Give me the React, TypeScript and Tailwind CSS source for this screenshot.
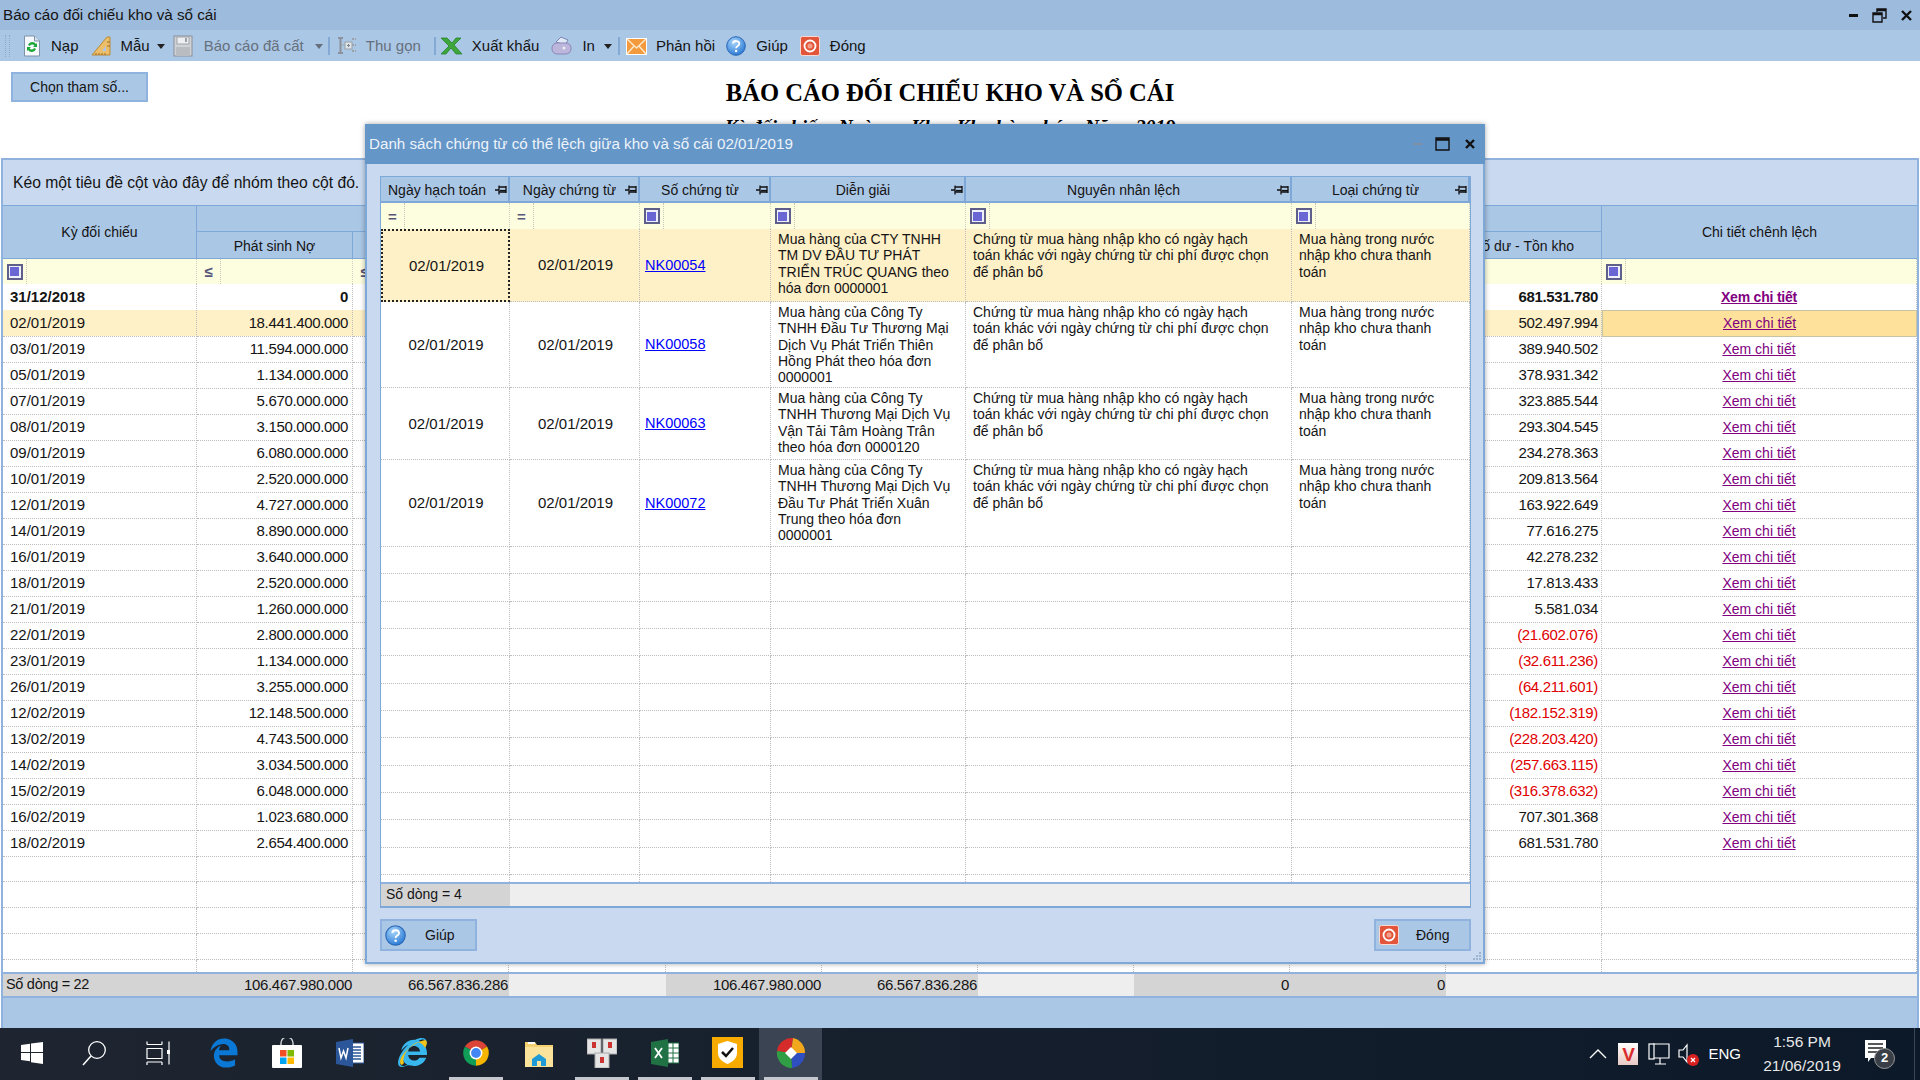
import React from "react";
import { FaEdgeLegacy, FaInternetExplorer } from "react-icons/fa6";

const GRID = "grid grid-cols-[194px_156px_156px_157px_156px_156px_156px_156px_156px_156px_315px]";
const MGRID = "grid grid-cols-[129px_130px_131px_195px_326px_178px]";
const DOT = "border-r border-b border-dotted border-[#bdbdbd]";

const rows: [string, string, string][] = [
  ["02/01/2019", "18.441.400.000", "502.497.994"],
  ["03/01/2019", "11.594.000.000", "389.940.502"],
  ["05/01/2019", "1.134.000.000", "378.931.342"],
  ["07/01/2019", "5.670.000.000", "323.885.544"],
  ["08/01/2019", "3.150.000.000", "293.304.545"],
  ["09/01/2019", "6.080.000.000", "234.278.363"],
  ["10/01/2019", "2.520.000.000", "209.813.564"],
  ["12/01/2019", "4.727.000.000", "163.922.649"],
  ["14/01/2019", "8.890.000.000", "77.616.275"],
  ["16/01/2019", "3.640.000.000", "42.278.232"],
  ["18/01/2019", "2.520.000.000", "17.813.433"],
  ["21/01/2019", "1.260.000.000", "5.581.034"],
  ["22/01/2019", "2.800.000.000", "(21.602.076)"],
  ["23/01/2019", "1.134.000.000", "(32.611.236)"],
  ["26/01/2019", "3.255.000.000", "(64.211.601)"],
  ["12/02/2019", "12.148.500.000", "(182.152.319)"],
  ["13/02/2019", "4.743.500.000", "(228.203.420)"],
  ["14/02/2019", "3.034.500.000", "(257.663.115)"],
  ["15/02/2019", "6.048.000.000", "(316.378.632)"],
  ["16/02/2019", "1.023.680.000", "707.301.368"],
  ["18/02/2019", "2.654.400.000", "681.531.780"],
];

const reason = "Chứng từ mua hàng nhập kho có ngày hạch\ntoán khác với ngày chứng từ chi phí được chọn\nđể phân bổ";
const kind = "Mua hàng trong nước\nnhập kho chưa thanh\ntoán";
const docs = [
  { no: "NK00054", h: "h-[73px]", desc: "Mua hàng của CTY TNHH\nTM DV ĐẦU TƯ PHÁT\nTRIỂN TRÚC QUANG theo\nhóa đơn 0000001" },
  { no: "NK00058", h: "h-[86px]", desc: "Mua hàng của Công Ty\nTNHH Đầu Tư Thương Mại\nDịch Vụ Phát Triển Thiên\nHồng Phát theo hóa đơn\n0000001" },
  { no: "NK00063", h: "h-[72px]", desc: "Mua hàng của Công Ty\nTNHH Thương Mại Dịch Vụ\nVận Tải Tâm Hoàng Trân\ntheo hóa đơn 0000120" },
  { no: "NK00072", h: "h-[87px]", desc: "Mua hàng của Công Ty\nTNHH Thương Mại Dịch Vụ\nĐầu Tư Phát Triển Xuân\nTrung theo hóa đơn\n0000001" },
];

function FilterBox() {
  return (
    <span className="flex h-[16px] w-[16px] items-center justify-center border-2 border-[#5f5f8c] bg-[#eef0fa]">
      <span className="h-[9px] w-[9px] bg-[#6a66d4]" />
    </span>
  );
}

function FilterCell({ op, cls = "" }: { op?: string; cls?: string }) {
  return (
    <div className={`flex items-center border-r border-dotted border-[#d0d0c0] ${cls}`}>
      <div className="flex h-full w-[24px] items-center justify-center border-r border-dotted border-[#c8c8b8]">
        {op === undefined ? <FilterBox /> : op === "" ? null : <span className="text-[15px] font-bold leading-none text-[#56567a]">{op}</span>}
      </div>
    </div>
  );
}

function Pin() {
  return (
    <svg width="13" height="12" viewBox="0 0 13 12" className="shrink-0">
      <path d="M0 6h4M4 1.5v9M4 3h7v5H4M11 2v7" fill="none" stroke="#111" strokeWidth="1.3" />
      <path d="M5 6.6h6" stroke="#111" strokeWidth="1.4" />
    </svg>
  );
}

const Arrow = () => (
  <svg width="8" height="5" viewBox="0 0 8 5" className="shrink-0"><path d="M0 0h8L4 5z" fill="#222" /></svg>
);
const GrayArrow = () => (
  <svg width="8" height="5" viewBox="0 0 8 5" className="shrink-0"><path d="M0 0h8L4 5z" fill="#66707c" /></svg>
);
const Sep = ({ cls }: { cls: string }) => <span className={`h-[18px] w-[2px] bg-[#84a9d4] ${cls}`} />;

const IconNap = () => (
  <svg width="18" height="22" viewBox="0 0 18 22" className="shrink-0">
    <path d="M1.5 1h10l5 5v15h-15z" fill="#f5f8fc" stroke="#7f93a8" />
    <path d="M11.5 1v5h5" fill="#d7e2ee" stroke="#7f93a8" />
    <path d="M5 10a4.5 4.5 0 0 1 8-1l1-1v4h-4l1.4-1.3A2.6 2.6 0 0 0 6.800 11z" fill="#1fa83a" />
    <path d="M13 14a4.500 4.500 0 0 1-8 1l-1 1v-4h4l-1.400 1.300A2.600 2.600 0 0 0 11.200 13z" fill="#1fa83a" />
  </svg>
);
const IconRuler = () => (
  <svg width="20" height="20" viewBox="0 0 20 20" className="shrink-0">
    <path d="M1 19 16 1h3v18z" fill="#edbe6a" stroke="#b98a34" />
    <path d="M11 15l4-5v5z" fill="#abc7e6" />
    <path d="M5 17v2M8 17v2M11 17v2M14 17v2M16 6h3M16 10h3" stroke="#9b6f22" />
  </svg>
);
const IconSave = () => (
  <svg width="20" height="22" viewBox="0 0 20 22" className="shrink-0">
    <rect x="1" y="1" width="18" height="20" fill="#cfd2d6" stroke="#8d9299" />
    <rect x="4" y="2" width="12" height="7" fill="#eceef0" stroke="#a0a4aa" />
    <rect x="12" y="3" width="2" height="4" fill="#9ba0a6" />
    <rect x="3" y="12" width="14" height="9" fill="#b9bcc1" />
  </svg>
);
const IconTree = () => (
  <svg width="20" height="22" viewBox="0 0 20 22" className="shrink-0">
    <path d="M1 3h5M3.500 3v15M1 18h5" fill="none" stroke="#8b929b" strokeWidth="2" />
    <path d="M4 10h4" stroke="#a3a9b0" />
    <rect x="8" y="7" width="7" height="7" fill="#dfe4e9" stroke="#9aa1a9" />
    <path d="M10 10.500h3M11.500 9v3" stroke="#7d858e" />
    <path d="M15 4h4M15 10h4M15 16h4" stroke="#9aa1a9" strokeWidth="2" strokeDasharray="2 1" />
  </svg>
);
const IconX = () => (
  <svg width="22" height="18" viewBox="0 0 22 18" className="shrink-0">
    <path d="M0 1h6l5 5 4-5h5l-7 7 8 9h-6l-5-6-5 6H0l8-8z" fill="#3ea63a" stroke="#1d7d23" strokeWidth=".7" />
  </svg>
);
const IconPrinter = () => (
  <svg width="21" height="20" viewBox="0 0 21 20" className="shrink-0">
    <path d="M5 6 10 1l7 3-3 5z" fill="#dfe8f6" stroke="#7d86b4" />
    <rect x="1" y="7" width="19" height="11" rx="5" fill="#bcb5dc" stroke="#8c86b8" />
    <circle cx="13" cy="12" r="1.500" fill="#eee" />
  </svg>
);
const IconMail = () => (
  <svg width="21" height="17" viewBox="0 0 21 17" className="shrink-0">
    <rect x=".5" y=".5" width="20" height="16" fill="#f39a3c" stroke="#fff" />
    <path d="M1 1l9.500 9L20 1M1 16l7-8M20 16l-7-8" fill="none" stroke="#fde7c8" strokeWidth="1.500" />
  </svg>
);
const IconHelp = ({ s = 20 }: { s?: number }) => (
  <svg width={s} height={s} viewBox="0 0 20 20" className="shrink-0">
    <defs>
      <radialGradient id="hg" cx=".4" cy=".3" r=".8"><stop offset="0" stopColor="#a9d6fb" /><stop offset="1" stopColor="#1c6fd0" /></radialGradient>
    </defs>
    <circle cx="10" cy="10" r="9.300" fill="url(#hg)" stroke="#2a67b4" />
    <path d="M7 7.500c.3-3.500 6.300-3.200 6.300.3 0 2.300-3.200 2.200-3.200 4.500" fill="none" stroke="#fff" strokeWidth="1.800" />
    <circle cx="10.100" cy="15" r="1.200" fill="#fff" />
  </svg>
);
const IconClose = ({ s = 20 }: { s?: number }) => (
  <svg width={s} height={s} viewBox="0 0 20 20" className="shrink-0">
    <rect x=".5" y=".5" width="19" height="19" rx="2" fill="#e2553a" stroke="#f8d8d0" />
    <circle cx="10" cy="10" r="5.500" fill="none" stroke="#fff" strokeWidth="1.800" />
    <circle cx="10" cy="10" r="2.500" fill="#f2a08c" />
  </svg>
);

const Win = () => (
  <svg width="22" height="22" viewBox="0 0 22 22"><path d="M0 3l9-1.300V10H0zM10 1.500 22 0v10H10zM0 11h9v8.300L0 18zM10 11h12v11l-12-1.700z" fill="#fff" /></svg>
);
const Search = () => (
  <svg width="26" height="28" viewBox="0 0 26 28"><circle cx="15" cy="11" r="8.300" fill="none" stroke="#fff" strokeWidth="1.300" /><path d="M9 17 1 26" stroke="#fff" strokeWidth="1.500" /></svg>
);
const TaskView = () => (
  <svg width="24" height="24" viewBox="0 0 24 24" fill="none" stroke="#fff" strokeWidth="1.200">
    <path d="M1 3.500h15M1 .5v3M16 .5v3M1 7.500h15v10H1zM1 21h15M1 21v3M16 21v3M23 .5v23" />
    <rect x="21" y="9" width="4" height="4" fill="#fff" stroke="none" />
  </svg>
);
const Store = () => (
  <svg width="30" height="30" viewBox="0 0 30 30">
    <path d="M9 8V5a6 6 0 0 1 12 0v3" fill="none" stroke="#c9ccd0" strokeWidth="1.500" />
    <rect y="7" width="30" height="23" rx="1" fill="#fff" />
    <rect x="8" y="12" width="6.500" height="6.500" fill="#f25022" />
    <rect x="15.500" y="12" width="6.500" height="6.500" fill="#7fba00" />
    <rect x="8" y="19.500" width="6.500" height="6.500" fill="#00a4ef" />
    <rect x="15.500" y="19.500" width="6.500" height="6.500" fill="#ffb900" />
  </svg>
);
const Word = () => (
  <svg width="28" height="28" viewBox="0 0 28 28">
    <rect x="13" y="4" width="15" height="20" fill="#fff" stroke="#2b579a" />
    <path d="M16 8h9M16 11h9M16 14h9M16 17h9M16 20h9" stroke="#2b579a" strokeWidth="1.300" />
    <path d="M0 3 17 0v28L0 25z" fill="#2b579a" />
    <path d="M3 9l2 10 2.500-7 2.500 7 2-10" fill="none" stroke="#fff" strokeWidth="1.500" />
  </svg>
);
const IE = () => (
  <span className="relative flex h-[30px] w-[30px] items-center justify-center">
    <FaInternetExplorer className="text-[29px] text-[#38b6ee]" />
    <svg width="30" height="30" viewBox="0 0 30 30" className="absolute left-0 top-0">
      <path d="M4 27C-3 24 10 6 27 2c3 1 2 5 0 8-1-3-4-5-7-6C11 7 3 20 6 25z" fill="#f2c318" />
    </svg>
  </span>
);
const Chrome = () => (
  <svg width="28" height="28" viewBox="0 0 24 24">
    <path d="M12 12 2.500 6.500A11 11 0 0 1 21.500 6.500Z" fill="#db4437" />
    <path d="M12 12 2.500 6.500A11 11 0 0 0 12 23Z" fill="#0f9d58" />
    <path d="M12 12 21.500 6.500A11 11 0 0 1 12 23Z" fill="#f4b400" />
    <circle cx="12" cy="12" r="5.500" fill="#fff" />
    <circle cx="12" cy="12" r="4.200" fill="#4285f4" />
  </svg>
);
const Folder = () => (
  <svg width="28" height="28" viewBox="0 0 28 28">
    <path d="M0 3h10l2 3h16v22H0z" fill="#f6d16f" />
    <path d="M0 8h28v20H0z" fill="#fbe39c" />
    <path d="M3 3h7v2H3z" fill="#fff" />
    <path d="M7 27v-7l7-5 7 5v7h-5v-5h-4v5z" fill="#1e9bd7" />
  </svg>
);
const Tiles = () => (
  <svg width="30" height="30" viewBox="0 0 30 30">
    <rect x="0" y="1" width="14" height="15" fill="#e5e5e5" stroke="#aaa" />
    <rect x="16" y="1" width="14" height="15" fill="#e5e5e5" stroke="#aaa" />
    <rect x="8" y="15" width="14" height="15" fill="#e5e5e5" stroke="#aaa" />
    <rect x="5" y="4" width="4" height="6" fill="#c33" />
    <rect x="21" y="4" width="4" height="6" fill="#c33" />
    <rect x="13" y="19" width="4" height="6" fill="#c33" />
  </svg>
);
const Excel = () => (
  <svg width="28" height="28" viewBox="0 0 28 28">
    <rect x="13" y="4" width="15" height="20" fill="#fff" stroke="#207245" />
    <path d="M17 4v20M22 4v20M13 9h15M13 14h15M13 19h15" stroke="#207245" />
    <path d="M0 3 17 0v28L0 25z" fill="#207245" />
    <path d="M4 9l7 10M11 9l-7 10" stroke="#fff" strokeWidth="1.800" />
  </svg>
);
const Shield = () => (
  <svg width="31" height="31" viewBox="0 0 31 31">
    <rect width="31" height="31" fill="#f7ab00" />
    <path d="M15.500 4 25 7v9c0 6-5 9-9.500 11C11 25 6 22 6 16V7z" fill="#fff" />
    <path d="M10 15l4 4 7-8" fill="none" stroke="#111" strokeWidth="2.500" />
  </svg>
);
const AppIcon = () => (
  <svg width="30" height="32" viewBox="0 0 30 32">
    <path d="M15 16 1 14A15 15 0 0 1 17 1z" fill="#d52b2b" />
    <path d="M15 16 17 1a15 15 0 0 1 12 15z" fill="#f2a81d" />
    <path d="M15 16h14a15 15 0 0 1-13 15z" fill="#2f4fc0" />
    <path d="M15 16 16 31A15 15 0 0 1 1 14z" fill="#2f9e44" />
    <path d="M15 10l6 6-6 6-6-6z" fill="#fff" />
  </svg>
);

const Tb = ({ children, active, on }: { children: React.ReactNode; active?: boolean; on?: boolean }) => (
  <div className={`flex h-full w-[63px] shrink-0 flex-col items-center ${on ? "bg-[#3a4452]" : ""}`}>
    <div className="flex flex-1 items-center justify-center">{children}</div>
    <div className={`h-[3px] w-[54px] ${active ? "bg-[#c4c8ce]" : ""}`} />
  </div>
);

function MainRow({ d, a, b, sel, bold, red }: { d?: string; a?: string; b?: string; sel?: boolean; bold?: boolean; red?: boolean }) {
  const bg = sel ? "bg-[#fef0c7]" : "";
  return (
    <div className={`${GRID} h-[26px] shrink-0 items-stretch leading-[25px] ${bold ? "font-bold" : ""} ${bg}`}>
      <div className={`${DOT} pl-[7px]`}>{d}</div>
      <div className={`${DOT} pr-[4px] text-right tracking-[-0.35px]`}>{a}</div>
      {[0, 1, 2, 3, 4, 5, 6].map((i) => <div key={i} className={DOT} />)}
      <div className={`${DOT} pr-[3px] text-right tracking-[-0.35px] ${red ? "text-[#e00000]" : ""}`}>{b}</div>
      <div className={sel ? "border border-[#c9c3a6] bg-[#fee19a] text-center text-[14px]" : `${DOT} pt-[1px] text-center text-[14px] ${bold ? "tracking-[-0.2px]" : ""}`}>
        {d ? <span className="text-[#800080] underline">Xem chi tiết</span> : null}
      </div>
    </div>
  );
}

function ModalRow({ doc, first }: { doc: typeof docs[number]; first: boolean }) {
  const bg = first ? "bg-[#fef0c7]" : "";
  const txt = `${DOT} whitespace-pre-line pl-[7px] pt-[2px] text-[14px] leading-[16.3px]`;
  return (
    <div className={`${MGRID} ${doc.h} shrink-0 ${bg}`}>
      <div className={first ? "flex items-center justify-center border-2 border-dotted border-[#222] pl-[2px] pt-[1px]" : `${DOT} flex items-center justify-center pl-[2px] pt-[1px]`}>02/01/2019</div>
      <div className={`${DOT} flex items-center justify-center pl-[2px] pt-[1px]`}>02/01/2019</div>
      <div className={`${DOT} flex items-center pl-[5px] pt-[1px] text-[14.500px]`}><span className="text-[#0000ff] underline">{doc.no}</span></div>
      <div className={txt}>{doc.desc}</div>
      <div className={txt}>{reason}</div>
      <div className={txt}>{kind}</div>
    </div>
  );
}

function ModalHead({ label, center }: { label: string; center?: boolean }) {
  return (
    <div className="flex items-center border-r-2 border-[#7ea8d8] pl-[7px] pt-[2px] text-[14px]">
      <span className={`flex-1 whitespace-nowrap ${center ? "pr-[3px] text-center" : ""}`}>{label}</span>
      <Pin />
    </div>
  );
}

export default function App() {
  return (
    <div className="relative flex h-[1080px] w-[1920px] flex-col overflow-hidden bg-white text-[15px] text-[#141414] [font-family:'Liberation_Sans',Arial,sans-serif]">
      {/* window title */}
      <div className="flex h-[30px] shrink-0 items-center bg-[#9dbbdc] pl-[3px]">
        <span className="flex-1 text-[15.200px]">Báo cáo đối chiếu kho và sổ cái</span>
        <span className="h-[3px] w-[9px] bg-[#111]" />
        <svg width="15" height="15" viewBox="0 0 15 15" className="ml-[14px]"><path d="M5 4V1h9v9h-3M1 5h9v9H1zM1 6.500h9M5 2.500h9" fill="none" stroke="#111" strokeWidth="1.400" /></svg>
        <svg width="11" height="11" viewBox="0 0 11 11" className="ml-[14px] mr-[8px]"><path d="M1 1l9 9M10 1l-9 9" stroke="#111" strokeWidth="2.400" /></svg>
      </div>

      {/* toolbar */}
      <div className="flex h-[31px] shrink-0 items-center bg-[#abc7e6] pl-[5px] pt-[1px]">
        <span className="h-[22px] w-[5px] border-x border-dotted border-[#8fa9c6]" />
        <span className="ml-[13px] flex items-center"><IconNap /></span>
        <span className="ml-[10px]">Nạp</span>
        <span className="ml-[12px]"><IconRuler /></span>
        <span className="ml-[10px]">Mẫu</span>
        <span className="ml-[7px]"><Arrow /></span>
        <span className="ml-[8px]"><IconSave /></span>
        <span className="ml-[11px] text-[#66707c]">Báo cáo đã cất</span>
        <span className="ml-[11px]"><GrayArrow /></span>
        <Sep cls="ml-[5px]" />
        <span className="ml-[7px]"><IconTree /></span>
        <span className="ml-[9px] text-[#66707c]">Thu gọn</span>
        <Sep cls="ml-[13px]" />
        <span className="ml-[5px]"><IconX /></span>
        <span className="ml-[9px]">Xuất khẩu</span>
        <span className="ml-[12px]"><IconPrinter /></span>
        <span className="ml-[10px]">In</span>
        <span className="ml-[9px]"><Arrow /></span>
        <Sep cls="ml-[6px]" />
        <span className="ml-[6px]"><IconMail /></span>
        <span className="ml-[9px]">Phản hồi</span>
        <span className="ml-[11px]"><IconHelp /></span>
        <span className="ml-[10px]">Giúp</span>
        <span className="ml-[12px]"><IconClose /></span>
        <span className="ml-[10px]">Đóng</span>
      </div>

      {/* report heading */}
      <div className="flex h-[97px] shrink-0 overflow-hidden pl-[11px] pt-[11px]">
        <button className="h-[30px] w-[137px] shrink-0 border-2 border-[#8fb3de] bg-[#abc7e6] text-[14px] leading-[24px] text-[#141414]">Chọn tham số...</button>
        <div className="ml-[-148px] flex w-[1900px] shrink-0 flex-col items-center text-center [font-family:'Liberation_Serif','Times_New_Roman',serif]">
          <div className="mt-[7px] text-[24.600px] font-bold leading-[28px] text-black">BÁO CÁO ĐỐI CHIẾU KHO VÀ SỔ CÁI</div>
          <div className="mt-[7px] whitespace-pre text-[19.800px] font-bold italic leading-[24px] text-black">Kỳ đối chiếu: Ngày      Kho: Kho hàng hóa; Năm: 2019</div>
        </div>
      </div>

      {/* main grid */}
      <div className="mx-[1px] flex min-h-0 flex-1 flex-col border-x-2 border-[#8fb3de]">
        <div className="h-[47px] shrink-0 border-t-2 border-[#8fb3de] bg-[#c9daf0] pl-[10px] text-[15.700px] leading-[45px]">Kéo một tiêu đề cột vào đây để nhóm theo cột đó.</div>
        <div className={`${GRID} h-[54px] shrink-0 grid-rows-[27px_27px] bg-[#abc7e6]`}>
          <div className="row-span-2 flex items-center justify-center border-y border-r border-[#7ea8d8] text-[14px]">Kỳ đối chiếu</div>
          <div className="col-span-9 border-y border-r border-[#7ea8d8]" />
          <div className="row-span-2 flex items-center justify-center border-y border-[#7ea8d8] text-[14px]">Chi tiết chênh lệch</div>
          <div className="flex items-center justify-center border-b border-r border-[#7ea8d8] pt-[2px] text-[14px]">Phát sinh Nợ</div>
          {[0, 1, 2, 3, 4, 5, 6].map((i) => <div key={i} className="border-b border-r border-[#7ea8d8]" />)}
          <div className="flex items-center justify-center border-b border-r border-[#7ea8d8] pt-[2px] text-[14px]">Số dư - Tồn kho</div>
        </div>
        <div className={`${GRID} h-[25px] shrink-0 bg-[#fdfde0]`}>
          <FilterCell />
          <FilterCell op="≤" />
          <FilterCell op="≤" />
          {[0, 1, 2, 3, 4, 5, 6].map((i) => <FilterCell key={i} op="" />)}
          <FilterCell />
        </div>
        <div className="flex min-h-0 flex-1 flex-col overflow-hidden">
          <MainRow d="31/12/2018" a="0" b="681.531.780" bold />
          {rows.map((r, i) => <MainRow key={r[0]} d={r[0]} a={r[1]} b={r[2]} sel={i === 0} red={r[2].startsWith("(")} />)}
          {[0, 1, 2, 3, 4].map((i) => <MainRow key={i} />)}
        </div>
        <div className={`${GRID} h-[26px] shrink-0 border-y-2 border-[#8fb3de] bg-[#eeeeee] leading-[21px] tracking-[-0.3px]`}>
          <div className="bg-[#d4d4d4] pl-[3px] text-[14.500px]">Số dòng = 22</div>
          <div className="bg-[#d4d4d4] pr-[1px] text-right">106.467.980.000</div>
          <div className="bg-[#d4d4d4] pr-[1px] text-right">66.567.836.286</div>
          <div />
          <div className="bg-[#d4d4d4] pr-[1px] text-right">106.467.980.000</div>
          <div className="bg-[#d4d4d4] pr-[1px] text-right">66.567.836.286</div>
          <div />
          <div className="bg-[#d4d4d4] pr-[1px] text-right">0</div>
          <div className="bg-[#d4d4d4] pr-[1px] text-right">0</div>
          <div />
          <div />
        </div>
        <div className="h-[30px] shrink-0 bg-[#abc7e6]" />
      </div>

      {/* taskbar */}
      <div className="flex h-[52px] shrink-0 items-stretch bg-linear-to-r from-[#1e2530] to-[#0c1929] text-white">
        <Tb><Win /></Tb>
        <Tb><Search /></Tb>
        <Tb><TaskView /></Tb>
        <div className="w-[3px] shrink-0" />
        <Tb><FaEdgeLegacy className="text-[30px] text-[#0a78d4]" /></Tb>
        <Tb><Store /></Tb>
        <Tb><Word /></Tb>
        <Tb><IE /></Tb>
        <Tb active><Chrome /></Tb>
        <Tb><Folder /></Tb>
        <Tb active><Tiles /></Tb>
        <Tb active><Excel /></Tb>
        <Tb active><Shield /></Tb>
        <Tb active on><AppIcon /></Tb>
        <div className="ml-auto flex items-center pr-[5px]">
          <svg width="18" height="10" viewBox="0 0 18 10"><path d="M1 9l8-8 8 8" fill="none" stroke="#fff" strokeWidth="1.300" /></svg>
          <span className="ml-[11px] flex h-[22px] w-[20px] items-center justify-center bg-linear-to-b from-[#fff] to-[#e8c9c4] text-[19px] font-bold leading-none text-[#d92c2c]">V</span>
          <svg width="22" height="24" viewBox="0 0 22 24" className="ml-[10px]" fill="none" stroke="#fff" strokeWidth="1.200"><path d="M5 2h16v14H3M12 16v6M7 22h11" /><rect x="1" y="2" width="5" height="15" fill="#0c1929" /></svg>
          <svg width="22" height="24" viewBox="0 0 22 24" className="ml-[8px]"><path d="M1 8h4l4-5v17l-4-5H1z" fill="none" stroke="#fff" strokeWidth="1.200" /><circle cx="15" cy="18" r="6" fill="#d92020" /><path d="M13 16l4 4M17 16l-4 4" stroke="#fff" strokeWidth="1.200" /></svg>
          <span className="ml-[8px] text-[15px]">ENG</span>
          <div className="ml-[19px] flex w-[84px] flex-col items-center text-[15.500px] leading-[24px] text-[#e8e8e8]">
            <span>1:56 PM</span>
            <span>21/06/2019</span>
          </div>
          <span className="relative ml-[21px] h-[29px] w-[28px]">
            <svg width="22" height="24" viewBox="0 0 22 24"><path d="M0 0h21v18H6l-3 4v-4H0z" fill="#fff" /><path d="M3 4h15M3 8h15M3 12h15" stroke="#222" strokeWidth="1.300" /></svg>
            <span className="absolute left-[9px] top-[8px] flex h-[21px] w-[21px] items-center justify-center rounded-full border border-[#999] bg-[#3a3f47] text-[13px] font-bold">2</span>
          </span>
          <span className="ml-[21px] h-[52px] w-[1px] bg-[#3a4452]" />
        </div>
      </div>

      {/* dialog */}
      <div className="absolute left-[365px] top-[124px] flex h-[840px] w-[1120px] flex-col shadow-[0_0_5px_rgba(0,0,0,0.35)]">
        <div className="flex h-[40px] shrink-0 items-center bg-[#6496c8] pl-[4px] text-[#edf3fa]">
          <span className="flex-1 text-[15.200px]">Danh sách chứng từ có thể lệch giữa kho và sổ cái 02/01/2019</span>
          <span className="h-[2px] w-[9px] bg-[#7f8ea0]" />
          <svg width="15" height="14" viewBox="0 0 15 14" className="ml-[13px]"><path d="M1 1h13v12H1z" fill="none" stroke="#111" strokeWidth="1.400" /><path d="M1 2.500h13" stroke="#111" strokeWidth="2.500" /></svg>
          <svg width="10" height="10" viewBox="0 0 10 10" className="ml-[15px] mr-[10px]"><path d="M1 1l8 8M9 1l-8 8" stroke="#111" strokeWidth="2.400" /></svg>
        </div>
        <div className="relative flex flex-1 flex-col border-x-2 border-b-2 border-[#7ea8d8] bg-[#c9daf0] pl-[13px] pr-[12px] pt-[12px]">
          <div className="flex h-[732px] shrink-0 flex-col border-x border-t border-b-2 border-[#7ea8d8] bg-white">
            <div className={`${MGRID} h-[26px] shrink-0 border-b-2 border-[#7ea8d8] bg-[#abc7e6]`}>
              <ModalHead label="Ngày hạch toán" />
              <ModalHead label="Ngày chứng từ" center />
              <ModalHead label="Số chứng từ" center />
              <ModalHead label="Diễn giải" center />
              <ModalHead label="Nguyên nhân lệch" center />
              <ModalHead label="Loại chứng từ" center />
            </div>
            <div className={`${MGRID} h-[26px] shrink-0 bg-[#fdfde0]`}>
              <FilterCell op="=" />
              <FilterCell op="=" />
              <FilterCell />
              <FilterCell />
              <FilterCell />
              <FilterCell />
            </div>
            {docs.map((d, i) => <ModalRow key={d.no} doc={d} first={i === 0} />)}
            <div className="flex min-h-0 flex-1 flex-col overflow-hidden">
              {Array.from({ length: 13 }).map((_, i) => (
                <div key={i} className={`${MGRID} h-[27.330px] shrink-0`}>
                  {[0, 1, 2, 3, 4, 5].map((j) => <div key={j} className={DOT} />)}
                </div>
              ))}
            </div>
            <div className={`${MGRID} h-[24px] shrink-0 border-t-2 border-[#8fb3de] bg-[#eeeeee] leading-[21px]`}>
              <div className="bg-[#d4d4d4] pl-[5px] text-[14px]">Số dòng = 4</div>
            </div>
          </div>
          <div className="mt-[11px] flex h-[32px] shrink-0 justify-between">
            <button className="flex w-[97px] items-center border-2 border-[#8fb3de] bg-[#abc7e6] pl-[3px] text-[14px] text-[#141414]">
              <IconHelp s={21} />
              <span className="ml-[19px]">Giúp</span>
            </button>
            <button className="flex w-[97px] items-center border-2 border-[#8fb3de] bg-[#abc7e6] pl-[3px] text-[14px] text-[#141414]">
              <IconClose s={20} />
              <span className="ml-[17px]">Đóng</span>
            </button>
          </div>
          <svg width="10" height="10" viewBox="0 0 10 10" className="absolute bottom-[1px] right-[1px]"><path d="M7 1h2v2H7zM4 4h2v2H4zM7 4h2v2H7zM1 7h2v2H1zM4 7h2v2H4zM7 7h2v2H7z" fill="#9db4cf" /></svg>
        </div>
      </div>
    </div>
  );
}
